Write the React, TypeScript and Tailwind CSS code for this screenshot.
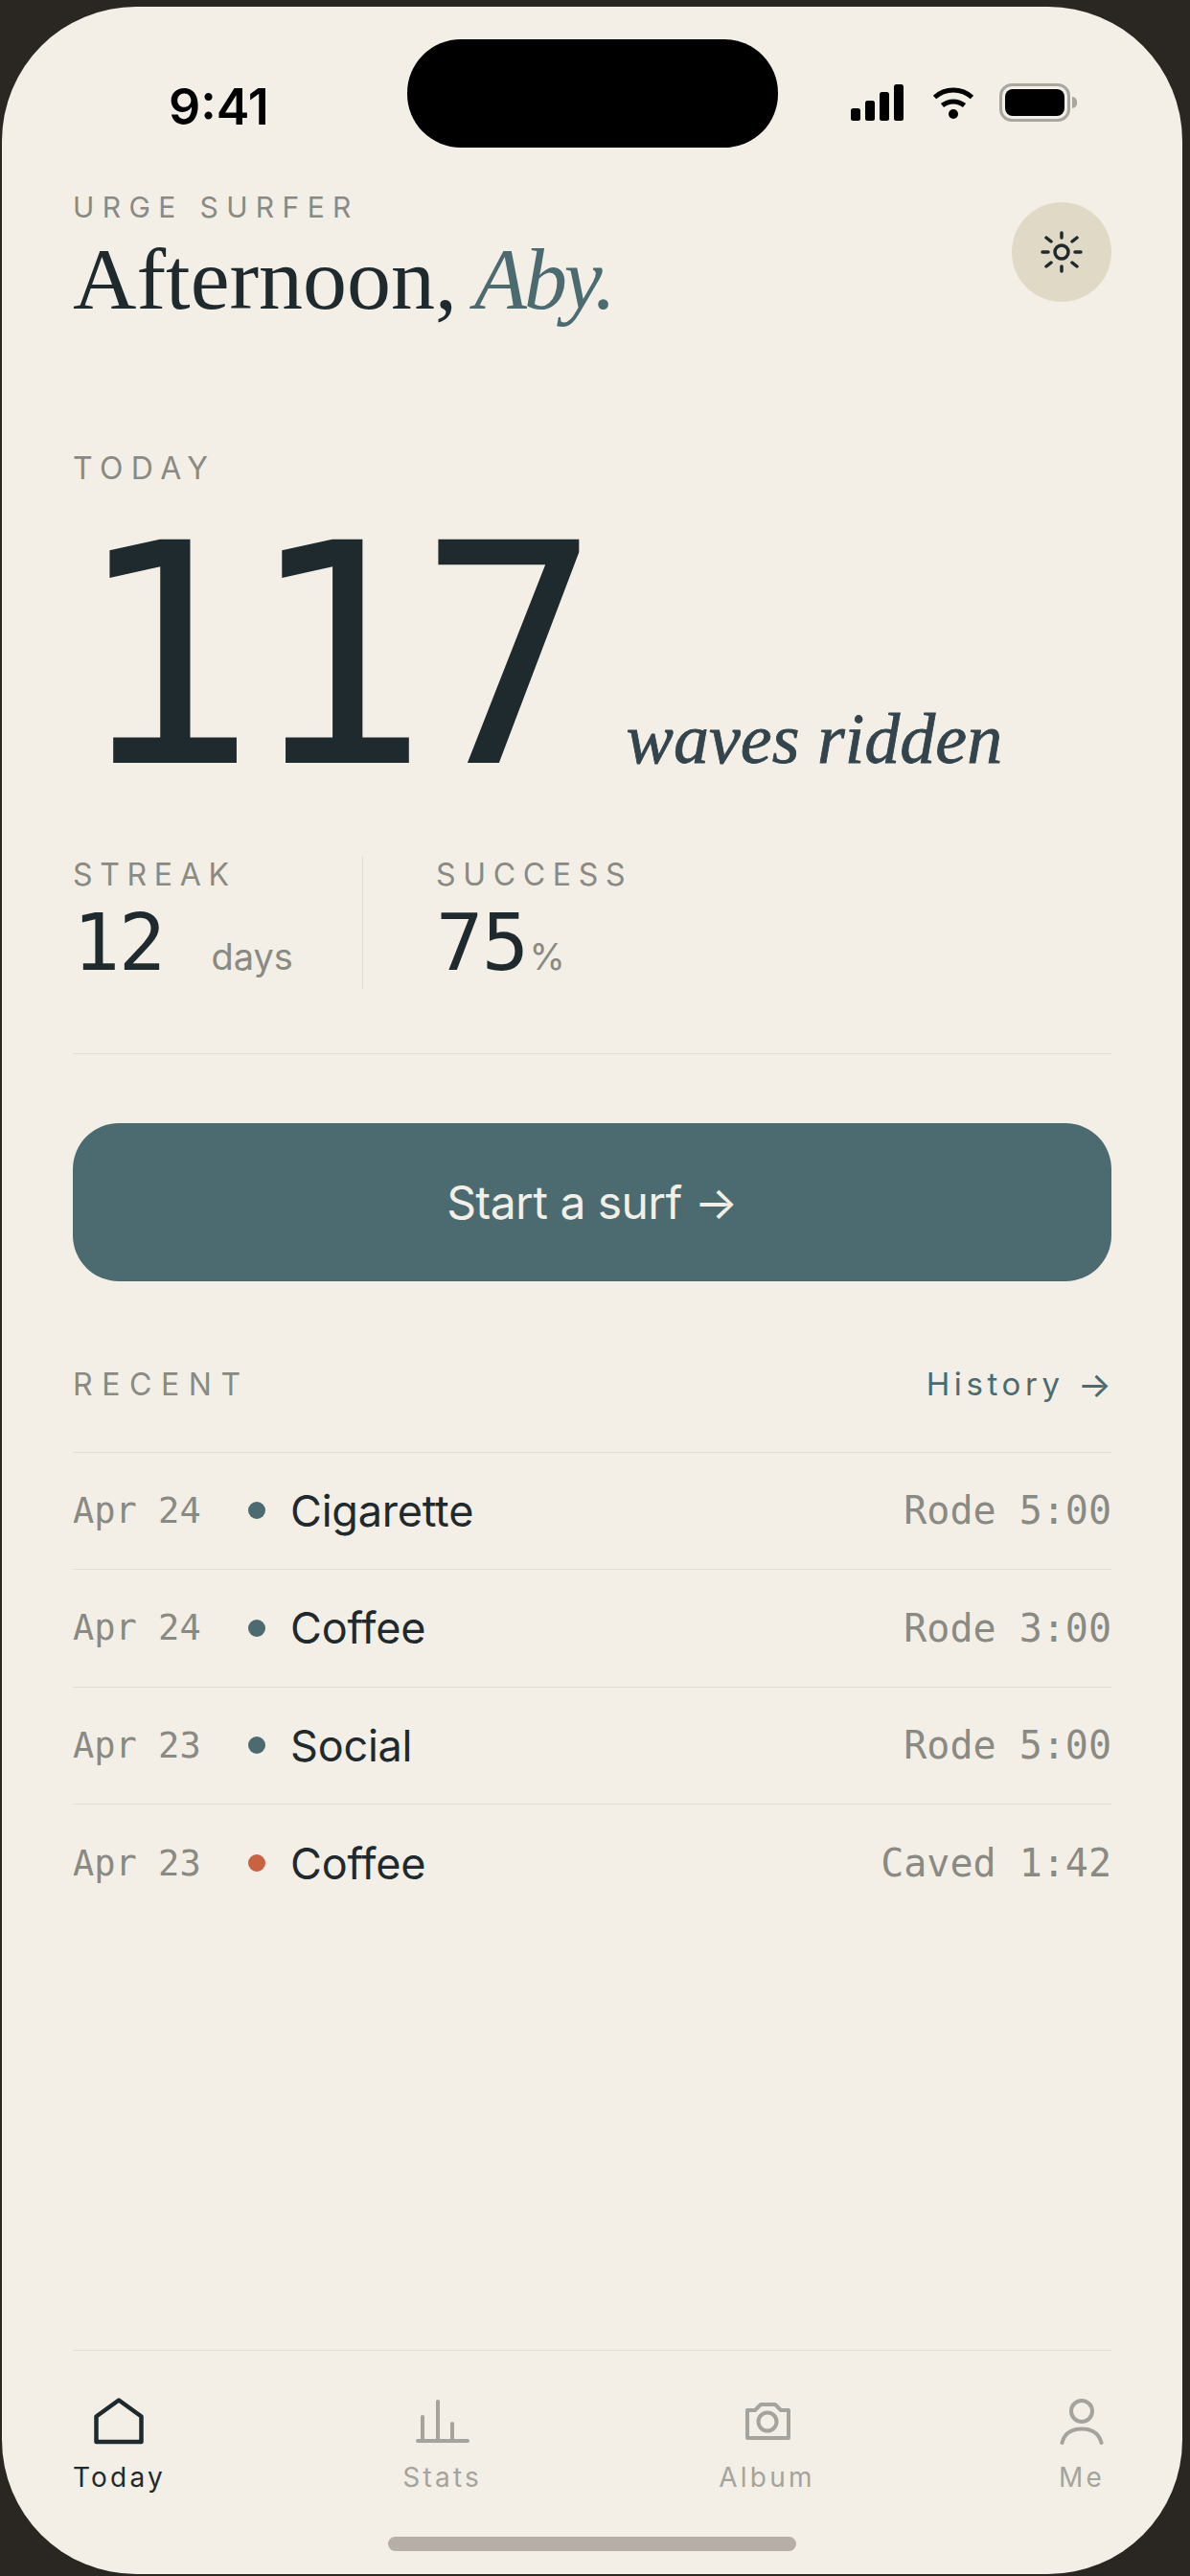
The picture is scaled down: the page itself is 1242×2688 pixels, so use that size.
const SANS = "font-['Inter',sans-serif]";

const rows = [
  { date: "Apr 24", name: "Cigarette", result: "Rode 5:00", caved: false },
  { date: "Apr 24", name: "Coffee", result: "Rode 3:00", caved: false },
  { date: "Apr 23", name: "Social", result: "Rode 5:00", caved: false },
  { date: "Apr 23", name: "Coffee", result: "Caved 1:42", caved: true },
];

function StatusIcons() {
  return (
    <div className="flex items-center">
      <svg width="56" height="40" viewBox="0 0 56 40" fill="#000">
        <rect x="0" y="26" width="10" height="13" rx="2.5" />
        <rect x="15" y="18" width="10" height="21" rx="2.5" />
        <rect x="30" y="9" width="10" height="30" rx="2.5" />
        <rect x="45" y="1" width="10" height="38" rx="2.5" />
      </svg>
      <svg className="ml-[29px]" width="44" height="36" viewBox="0 0 44 36" fill="none" stroke="#000" strokeWidth="5">
        <path d="M2.5 12.5C13.5 2.5 30.5 2.5 41.5 12.5" />
        <path d="M10.5 21C17 15.5 27 15.5 33.5 21" />
        <circle cx="22" cy="30" r="5" fill="#000" stroke="none" />
      </svg>
      <div className="ml-[26px] flex items-center">
        <div className="flex h-[40px] w-[74px] items-center justify-center rounded-[13px] border-[3px] border-[#a9a6a0]">
          <div className="h-[28px] w-[62px] rounded-[8px] bg-black" />
        </div>
        <div className="ml-[2px] h-[12px] w-[5px] rounded-r-full bg-[#a9a6a0]" />
      </div>
    </div>
  );
}

function NavItem({ label, active, children }: { label: string; active?: boolean; children: React.ReactNode }) {
  return (
    <div className="flex min-w-[62px] flex-col items-center">
      <div className="flex h-[59px] items-start">{children}</div>
      <span
        className={`${SANS} mt-[6px] text-[28px] leading-[36px] tracking-[0.115em] ${active ? "text-[#1f2a2e]" : "text-[#a5a39d]"}`}
      >
        {label}
      </span>
    </div>
  );
}

export default function App() {
  return (
    <div className="flex h-[2688px] w-[1242px] bg-[#2a2722] pt-[7px] pr-[8px] pb-[2px] pl-[2px]">
      <div className="relative flex w-full flex-col rounded-[140px] bg-[#f3efe6]">
        <div className="absolute top-[34px] left-[423px] h-[113px] w-[387px] rounded-[56px] bg-black" />

        <div className="flex items-start justify-between pt-[75px] pr-[110px] pl-[174px]">
          <span className={`${SANS} text-[52px] leading-[60px] font-semibold text-black`}>9:41</span>
          <div className="mt-[5px]">
            <StatusIcons />
          </div>
        </div>

        <div className="flex flex-col px-[74px]">
          <div className="mt-[56px] flex items-start justify-between">
            <div>
              <div className={`${SANS} text-[30px] leading-[36px] tracking-[0.28em] text-[#8a8a84]`}>URGE SURFER</div>
              <h1 className="mt-[5px] font-['Liberation_Serif',serif] text-[92px] leading-[104px] text-[#1f2a2e]">
                Afternoon, <em className="-ml-[5px] text-[90px] tracking-[-0.035em] text-[#4b6b70]">Aby.</em>
              </h1>
            </div>
            <button className="mt-[13px] flex size-[104px] items-center justify-center rounded-full bg-[#e0d9c5]">
              <svg width="44" height="44" viewBox="0 0 44 44" fill="none" stroke="#1f2a2e" strokeWidth="3.5" strokeLinecap="round">
                <circle cx="22" cy="22" r="7" />
                <path d="M22 2v5M22 37v5M2 22h6M36 22h6M6 7l5 4M38 7l-5 4M6 37l5-4M38 37l-5-4" />
              </svg>
            </button>
          </div>

          <div className={`${SANS} mt-[127px] text-[32px] leading-[36px] tracking-[0.26em] text-[#8a8a84]`}>TODAY</div>

          <div className="mt-[28px] flex items-baseline">
            <span className="font-['DejaVu_Sans_Mono',monospace] text-[320px] leading-[300px] tracking-[-0.04em] text-[#1f2a2e]">
              117
            </span>
            <span className="ml-[38px] font-['Liberation_Serif',serif] text-[74px] text-[#33444c] italic [-webkit-text-stroke:0.8px_#33444c]">
              waves ridden
            </span>
          </div>

          <div className="mt-[58px] flex border-b border-[#e2ddd4] pb-[67px]">
            <div className="w-[303px] border-r border-[#e2ddd4]">
              <div className={`${SANS} text-[32px] leading-[40px] tracking-[0.24em] text-[#8a8a84]`}>STREAK</div>
              <div className="mt-[3px] flex items-baseline">
                <span className="font-['DejaVu_Sans_Mono',monospace] text-[82px] leading-[96px] tracking-[-0.02em] text-[#1f2a2e]">12</span>
                <span className={`${SANS} ml-[49px] text-[38px] text-[#8a8a84]`}>days</span>
              </div>
            </div>
            <div className="pl-[76px]">
              <div className={`${SANS} text-[32px] leading-[40px] tracking-[0.24em] text-[#8a8a84]`}>SUCCESS</div>
              <div className="mt-[3px] flex items-baseline">
                <span className="font-['DejaVu_Sans_Mono',monospace] text-[82px] leading-[96px] tracking-[-0.02em] text-[#1f2a2e]">75</span>
                <span className={`${SANS} ml-[2px] text-[38px] text-[#8a8a84]`}>%</span>
              </div>
            </div>
          </div>

          <button className={`${SANS} mt-[72px] h-[165px] rounded-[48px] bg-[#4b6b70] text-[48px] tracking-[-0.012em] text-[#f3efe6]`}>
            Start a surf →
          </button>

          <div className="mt-[80px] flex items-center justify-between">
            <span className={`${SANS} text-[32px] tracking-[0.3em] text-[#8a8a84]`}>RECENT</span>
            <span className={`${SANS} flex items-center text-[33px] text-[#4b6b70]`}>
              <span className="tracking-[0.14em]">History</span>
              <span className="ml-[14px] text-[37px]">→</span>
            </span>
          </div>

          <div className="mt-[42px] flex flex-col border-t border-[#e2ddd4]">
            {rows.map((r, i) => (
              <div
                key={i}
                className={`flex h-[122.5px] items-center ${i < rows.length - 1 ? "border-b border-[#e2ddd4]" : ""}`}
              >
                <span className="w-[183px] font-['DejaVu_Sans_Mono',monospace] text-[37px] text-[#8a8a84]">{r.date}</span>
                <span className={`size-[18px] rounded-full ${r.caved ? "bg-[#c9623f]" : "bg-[#4b6b70]"}`} />
                <span className={`${SANS} ml-[26px] text-[45px] tracking-[-0.005em] text-[#1f2a2e]`}>{r.name}</span>
                <span className="ml-auto font-['DejaVu_Sans_Mono',monospace] text-[40px] text-[#8a8a84]">{r.result}</span>
              </div>
            ))}
          </div>
        </div>

        <div className="mx-[74px] mt-auto flex justify-between border-t border-[#e2ddd4] pt-[49px]">
          <NavItem label="Today" active>
            <svg width="52" height="50" viewBox="0 0 52 50" fill="none" stroke="#1f2a2e" strokeWidth="4.5" strokeLinejoin="round">
              <path d="M26 2.5L2.5 19.5V46H49.5V19.5Z" />
            </svg>
          </NavItem>
          <NavItem label="Stats">
            <svg width="56" height="48" viewBox="0 0 56 48" fill="none" stroke="#a5a39d" strokeWidth="4" strokeLinecap="round">
              <path d="M2 45H54M7 45V20M23 45V4M38 45V27" />
            </svg>
          </NavItem>
          <NavItem label="Album">
            <svg className="mt-[4px]" width="48" height="42" viewBox="0 0 48 42" fill="none" stroke="#a5a39d" strokeWidth="4" strokeLinejoin="round">
              <path d="M3 9H11L17 3H32L38 9H46V38H3Z" />
              <circle cx="24" cy="21" r="9.5" />
            </svg>
          </NavItem>
          <NavItem label="Me">
            <svg width="48" height="52" viewBox="0 0 48 52" fill="none" stroke="#a5a39d" strokeWidth="4" strokeLinecap="round">
              <circle cx="24" cy="14" r="11" />
              <path d="M3.5 47C6 37 14 32.5 24 32.5C34 32.5 42 37 44.5 47" />
            </svg>
          </NavItem>
        </div>

        <div className="mx-auto mt-[44px] mb-[24px] h-[15px] w-[426px] rounded-full bg-[#b5afa7]" />
      </div>
    </div>
  );
}
